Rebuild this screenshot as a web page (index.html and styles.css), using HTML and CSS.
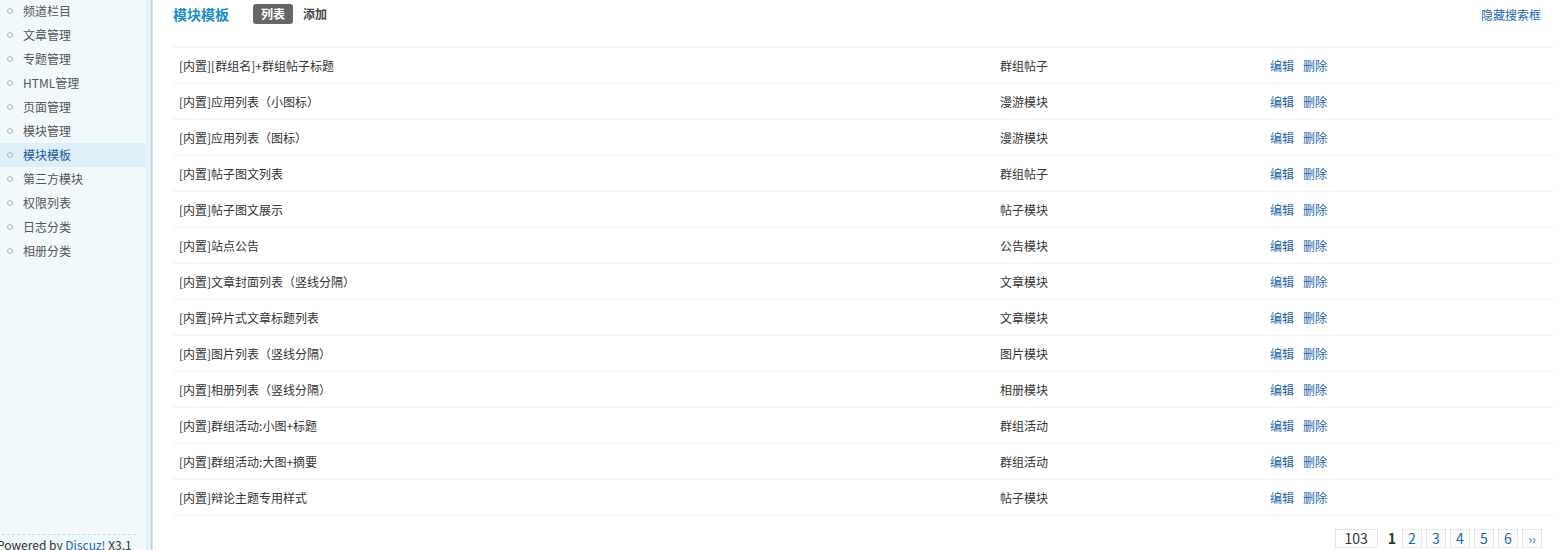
FILE: index.html
```html
<!DOCTYPE html>
<html lang="zh-CN">
<head>
<meta charset="utf-8">
<title>模块模板</title>
<link rel="stylesheet" href="styles.css">
</head>
<body>
<div class="page">
  <aside class="side">
    <ul class="menu">
      <li>频道栏目</li>
      <li>文章管理</li>
      <li>专题管理</li>
      <li>HTML管理</li>
      <li>页面管理</li>
      <li>模块管理</li>
      <li class="on">模块模板</li>
      <li>第三方模块</li>
      <li>权限列表</li>
      <li>日志分类</li>
      <li>相册分类</li>
    </ul>
    <div class="copy">Powered by <a class="lk" href="#">Discuz!</a> X3.1</div>
  </aside>
  <div class="band"></div>
  <main class="main">
    <div class="head">
      <h3 class="ttl">模块模板</h3>
      <span class="tab cur">列表</span>
      <span class="tab add">添加</span>
      <a class="lk hide" href="#">隐藏搜索框</a>
    </div>
    <table class="tb">
      <tr><td class="c1">[内置][群组名]+群组帖子标题</td><td class="c2">群组帖子</td><td class="c3"><a class="lk" href="#">编辑</a><a class="lk" href="#">删除</a></td></tr>
      <tr><td class="c1">[内置]应用列表（小图标）</td><td class="c2">漫游模块</td><td class="c3"><a class="lk" href="#">编辑</a><a class="lk" href="#">删除</a></td></tr>
      <tr><td class="c1">[内置]应用列表（图标）</td><td class="c2">漫游模块</td><td class="c3"><a class="lk" href="#">编辑</a><a class="lk" href="#">删除</a></td></tr>
      <tr><td class="c1">[内置]帖子图文列表</td><td class="c2">群组帖子</td><td class="c3"><a class="lk" href="#">编辑</a><a class="lk" href="#">删除</a></td></tr>
      <tr><td class="c1">[内置]帖子图文展示</td><td class="c2">帖子模块</td><td class="c3"><a class="lk" href="#">编辑</a><a class="lk" href="#">删除</a></td></tr>
      <tr><td class="c1">[内置]站点公告</td><td class="c2">公告模块</td><td class="c3"><a class="lk" href="#">编辑</a><a class="lk" href="#">删除</a></td></tr>
      <tr><td class="c1">[内置]文章封面列表（竖线分隔）</td><td class="c2">文章模块</td><td class="c3"><a class="lk" href="#">编辑</a><a class="lk" href="#">删除</a></td></tr>
      <tr><td class="c1">[内置]碎片式文章标题列表</td><td class="c2">文章模块</td><td class="c3"><a class="lk" href="#">编辑</a><a class="lk" href="#">删除</a></td></tr>
      <tr><td class="c1">[内置]图片列表（竖线分隔）</td><td class="c2">图片模块</td><td class="c3"><a class="lk" href="#">编辑</a><a class="lk" href="#">删除</a></td></tr>
      <tr><td class="c1">[内置]相册列表（竖线分隔）</td><td class="c2">相册模块</td><td class="c3"><a class="lk" href="#">编辑</a><a class="lk" href="#">删除</a></td></tr>
      <tr><td class="c1">[内置]群组活动:小图+标题</td><td class="c2">群组活动</td><td class="c3"><a class="lk" href="#">编辑</a><a class="lk" href="#">删除</a></td></tr>
      <tr><td class="c1">[内置]群组活动:大图+摘要</td><td class="c2">群组活动</td><td class="c3"><a class="lk" href="#">编辑</a><a class="lk" href="#">删除</a></td></tr>
      <tr><td class="c1">[内置]辩论主题专用样式</td><td class="c2">帖子模块</td><td class="c3"><a class="lk" href="#">编辑</a><a class="lk" href="#">删除</a></td></tr>
    </table>
    <div class="pg">
      <span class="pbox total">103</span>
      <strong class="pcur">1</strong>
      <a class="pbox" href="#">2</a>
      <a class="pbox" href="#">3</a>
      <a class="pbox" href="#">4</a>
      <a class="pbox" href="#">5</a>
      <a class="pbox" href="#">6</a>
      <a class="pbox nxt" href="#">››</a>
    </div>
  </main>
</div>
</body>
</html>
```

FILE: styles.css
```css
html, body {
  margin: 0;
  padding: 0;
  height: 550px;
  overflow: hidden;
}
body {
  font-family: Tahoma, "Noto Sans CJK SC", "Noto Sans", sans-serif;
  font-size: 12px;
  color: #333;
  background: #fff;
}
a { text-decoration: none; }
.lk { color: #2366a8; }

.page {
  display: flex;
  height: 550px;
}

.side {
  width: 146px;
  flex: none;
  background: #f2f9fd;
  display: flex;
  flex-direction: column;
}
.menu {
  list-style: none;
  margin: -1px 0 0;
  padding: 0;
}
.menu li {
  height: 24px;
  line-height: 24px;
  padding-left: 23px;
  position: relative;
  color: #555;
}
.menu li::before {
  content: "";
  position: absolute;
  left: 7px;
  top: 9px;
  width: 4px;
  height: 4px;
  border: 1px solid #b4b4b4;
  border-radius: 50%;
}
.menu li.on {
  background: #deeffa;
  color: #1c5a96;
}
.copy {
  margin-top: auto;
  margin-right: 10px;
  border-top: 1px dashed #cfdbe2;
  padding-top: 2px;
  margin-left: -3px;
  height: 13px;
  line-height: 16px;
  white-space: nowrap;
  color: #333;
}

.band {
  width: 7px;
  flex: none;
  background: linear-gradient(to right, #e4f1fa 0, #e9f4fb 4px, #c9dbe8 5px, #b9cbd8 6px, #fff 7px);
}

.main {
  flex: 1;
  padding: 0 8px 0 20px;
  display: flex;
  flex-direction: column;
}
.head {
  display: flex;
  align-items: center;
  height: 28px;
  margin-bottom: 19px;
}
.ttl {
  margin: 0 24px 0 0;
  font-size: 14px;
  font-weight: bold;
  color: #1a8cc4;
}
.tab {
  font-weight: bold;
  color: #444;
  padding: 0 8px;
  height: 20px;
  line-height: 20px;
  border-radius: 3px;
  margin-right: 3px;
}
.tab.cur {
  background: #666;
  color: #fff;
}
.tab.add { padding-left: 7px; }
.hide {
  margin-left: auto;
  margin-right: 12px;
}

.tb {
  width: 100%;
  border-collapse: collapse;
  border-top: 1px solid #f0f0f0;
}
.tb td {
  height: 35px;
  padding: 0 6px;
  border-bottom: 1px solid #f0f0f0;
  vertical-align: middle;
}
.tb .c1 { width: 809px; }
.tb .c2 { width: 258px; }
.tb .c3 .lk { margin-right: 9px; }

.pg {
  display: flex;
  justify-content: flex-end;
  align-items: center;
  gap: 4px;
  margin-top: 12px;
  margin-right: 11px;
}
.pbox {
  display: inline-block;
  height: 17px;
  line-height: 17px;
  padding: 0 5px;
  min-width: 8px;
  text-align: center;
  border: 1px solid #e4e4e4;
  color: #2366a8;
  font-size: 14px;
}
.pbox.total {
  width: 31px;
  color: #333;
  margin-right: 6px;
}
.pbox.nxt { font-size: 12px; }
.pcur {
  font-size: 14px;
  color: #333;
  margin-right: 2px;
}
```
